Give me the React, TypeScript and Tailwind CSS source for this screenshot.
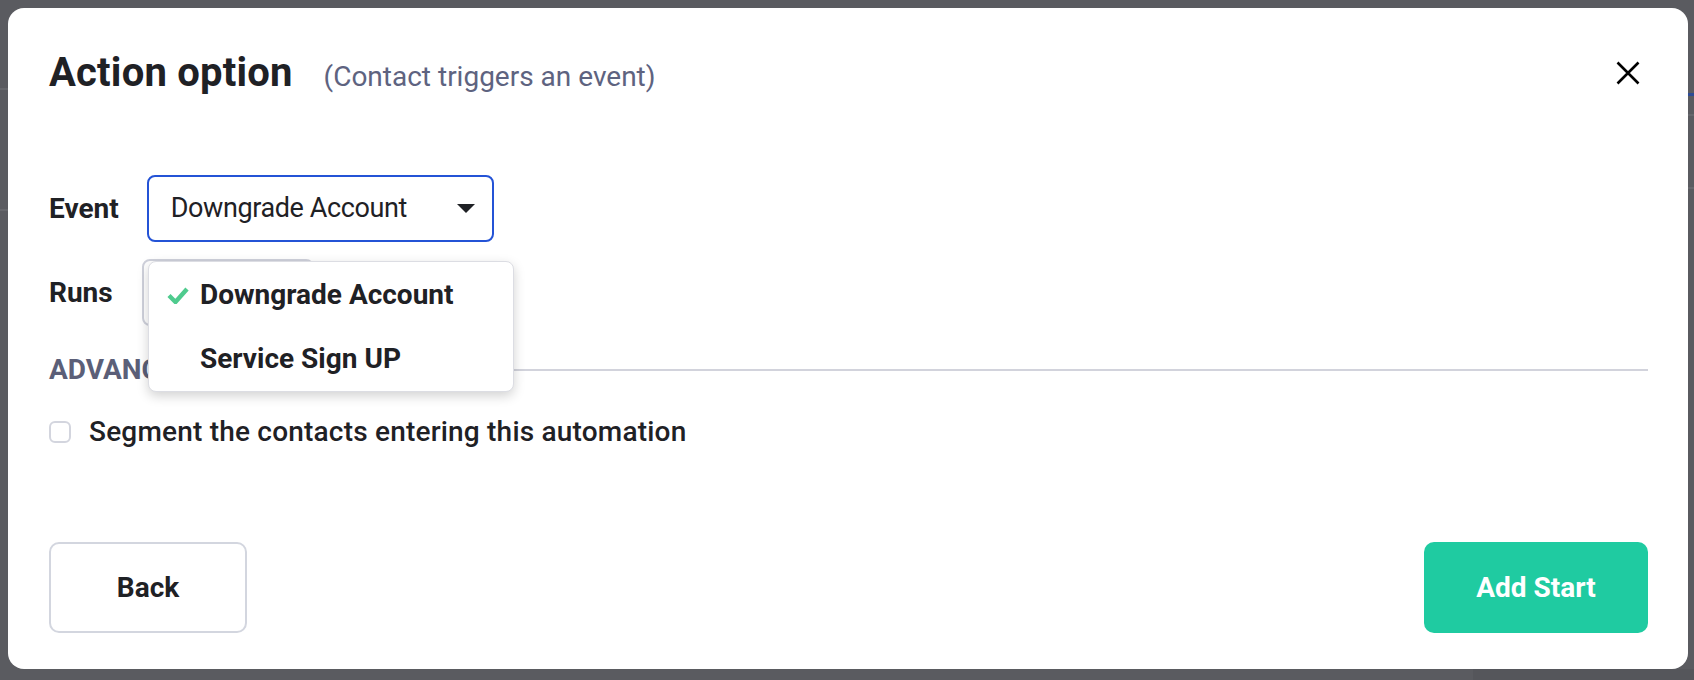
import React from "react";

const font = { fontFamily: "Roboto, 'Liberation Sans', sans-serif" };

function Caret() {
  return (
    <svg width="18" height="9" viewBox="0 0 18 9" className="shrink-0">
      <path d="M0 0 L18 0 L9 9 Z" fill="#1f2125" />
    </svg>
  );
}

function Check() {
  return (
    <svg width="22" height="18" viewBox="0 0 22 18" className="shrink-0">
      <path d="M2 9.5 L8.5 16 L20 3" fill="none" stroke="#4fcb8e" strokeWidth="4.4" strokeLinejoin="miter" />
    </svg>
  );
}

function CloseIcon() {
  return (
    <svg width="24" height="24" viewBox="0 0 24 24">
      <path d="M1.5 1.5 L22.5 22.5 M22.5 1.5 L1.5 22.5" stroke="#000" strokeWidth="2.6" fill="none" />
    </svg>
  );
}

export default function App() {
  return (
    <div className="relative w-[1694px] h-[680px] overflow-hidden bg-[#5a5b60]" style={font}>
      {/* faint page content behind the overlay */}
      <div className="absolute left-0 top-[88px] w-[8px] h-[2px] bg-[#66676c]" />
      <div className="absolute left-0 top-[209px] w-[8px] h-[2px] bg-[#66676c]" />
      <div className="absolute right-0 top-[93px] w-[6px] h-[3px] bg-[#2e4b95]" />
      <div className="absolute right-0 top-[114px] w-[6px] h-[2px] bg-[#66676c]" />
      <div className="absolute right-0 top-[187px] w-[6px] h-[2px] bg-[#66676c]" />
      <div className="absolute left-[1473px] top-[669px] w-[221px] h-[11px] bg-[#55565b]" />

      <div className="absolute left-[8px] top-[8px] w-[1680px] h-[661px] bg-white rounded-[16px] flex flex-col pt-[41px] pl-[41px] pr-[40px] pb-[36px]">
        {/* header */}
        <div className="flex items-center justify-between">
          <div className="flex items-baseline">
            <h1 className="text-[40px] leading-[48px] font-bold text-[#1f2125] tracking-[0.2px]">Action option</h1>
            <span className="ml-[31px] text-[28px] text-[#5e6380]">(Contact triggers an event)</span>
          </div>
          <button className="mr-[8px] mt-[-2px]">
            <CloseIcon />
          </button>
        </div>

        {/* form */}
        <div className="relative mt-[77px] flex flex-col">
          <div className="flex items-center gap-[28px]">
            <span className="text-[28px] font-bold text-[#1f2125]">Event</span>
            <div className="w-[347px] h-[67px] rounded-[8px] border-2 border-[#2453d6] flex items-center justify-between pl-[22px] pr-[17px]">
              <span className="text-[27px] text-[#1f2125] tracking-[-0.4px]">Downgrade Account</span>
              <Caret />
            </div>
          </div>

          <div className="mt-[17px] flex items-center gap-[29px]">
            <span className="text-[28px] font-bold text-[#1f2125]">Runs</span>
            <div className="w-[172px] h-[67px] rounded-[8px] border-2 border-[#cfd1db] bg-white" />
          </div>

          <div className="mt-[23px] flex items-center">
            <span className="text-[28px] font-bold text-[#5b5f78] uppercase">Advanced options</span>
            <div className="ml-[16px] flex-1 h-[2px] bg-[#d2d3dc]" />
          </div>

          <label className="mt-[20px] flex items-center gap-[18px]">
            <span className="w-[22px] h-[22px] rounded-[6px] border-2 border-[#d3d5de] bg-white" />
            <span className="text-[28px] font-medium text-[#1f2125] tracking-[0.2px]">Segment the contacts entering this automation</span>
          </label>

          {/* open dropdown */}
          <div className="absolute left-[99px] top-[86px] w-[366px] h-[131px] bg-white rounded-[8px] border border-[#dcdde3] shadow-[0_4px_12px_rgba(0,0,0,0.18)] flex flex-col py-[8px]">
            <div className="h-[57px] flex items-center pl-[18px] gap-[11px]">
              <Check />
              <span className="text-[28px] font-bold text-[#1f2125]">Downgrade Account</span>
            </div>
            <div className="h-[57px] flex items-center pl-[51px] mt-[15px]">
              <span className="text-[28px] font-bold text-[#1f2125]">Service Sign UP</span>
            </div>
          </div>
        </div>

        {/* footer */}
        <div className="mt-auto flex items-center justify-between">
          <button className="w-[198px] h-[91px] rounded-[10px] border-2 border-[#d3d6df] bg-white text-[28px] font-bold text-[#1f2125]">
            Back
          </button>
          <button className="w-[224px] h-[91px] rounded-[10px] bg-[#1fcba1] text-[28px] font-bold text-white">
            Add Start
          </button>
        </div>
      </div>
    </div>
  );
}
